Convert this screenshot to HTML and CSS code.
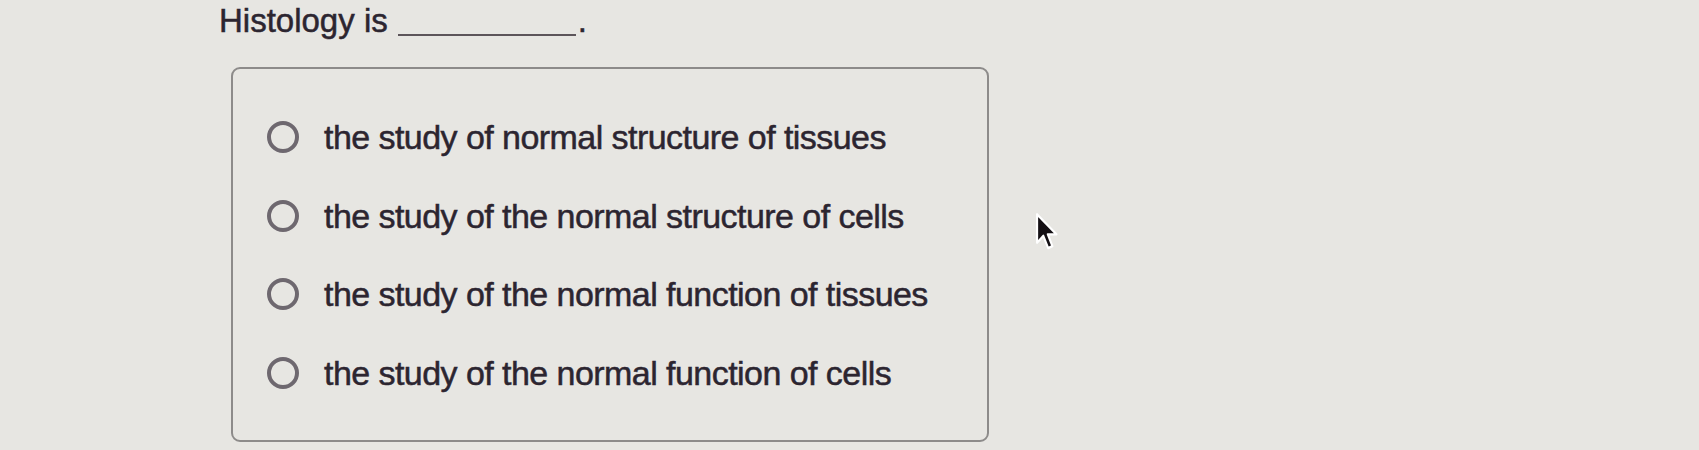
FILE: index.html
```html
<!DOCTYPE html>
<html>
<head>
<meta charset="utf-8">
<link rel="stylesheet" href="styles.css">
</head>
<body>
<div class="page">
  <div class="question">Histology is<span class="blank"></span><span class="dot">.</span></div>
  <div class="choices">
    <label class="option"><span class="radio"></span><span class="label">the study of normal structure of tissues</span></label>
    <label class="option"><span class="radio"></span><span class="label">the study of the normal structure of cells</span></label>
    <label class="option"><span class="radio"></span><span class="label">the study of the normal function of tissues</span></label>
    <label class="option"><span class="radio"></span><span class="label">the study of the normal function of cells</span></label>
  </div>
</div>
<svg class="cursor" width="25" height="40" viewBox="0 0 18 26" preserveAspectRatio="none">
  <path d="M1.5 1.5 L1.5 20 L6 15.5 L9.5 23.5 L12.5 22.2 L9.2 14.5 L15.5 14.5 Z" fill="#141014" stroke="#ffffff" stroke-width="1.5" stroke-linejoin="round"/>
</svg>
</body>
</html>
```
FILE: styles.css
```css
html, body {
  margin: 0;
  padding: 0;
}
body {
  background: #e7e6e2;
  width: 1699px;
  height: 450px;
  overflow: hidden;
  position: relative;
  font-family: "Liberation Sans", Arial, sans-serif;
  color: #2c2530;
}
.page {
  padding-left: 219px;
}
.question {
  padding-top: 4px;
  font-size: 33px;
  line-height: 34px;
  height: 34px;
  white-space: nowrap;
  -webkit-text-stroke: 0.5px #2c2530;
}
.blank {
  display: inline-block;
  width: 178px;
  height: 0;
  border-bottom: 2px solid #5c555a;
  margin-left: 10px;
  vertical-align: -4px;
}
.dot {
  margin-left: 2px;
}
.choices {
  margin-top: 29px;
  margin-left: 12px;
  width: 758px;
  height: 375px;
  box-sizing: border-box;
  border: 2px solid #8d8b8a;
  border-radius: 9px;
  padding: 48px 0 0 34px;
  display: flex;
  flex-direction: column;
  gap: 38.5px;
}
.option {
  display: flex;
  align-items: center;
  height: 40px;
}
.radio {
  width: 32px;
  height: 32px;
  box-sizing: border-box;
  border: 4px solid #6e686f;
  border-radius: 50%;
  flex: none;
}
.label {
  margin-left: 25px;
  font-size: 34px;
  line-height: 40px;
  letter-spacing: -0.55px;
  white-space: nowrap;
  -webkit-text-stroke: 0.5px #2c2530;
}
.cursor {
  position: absolute;
  left: 1035px;
  top: 212px;
}
```
